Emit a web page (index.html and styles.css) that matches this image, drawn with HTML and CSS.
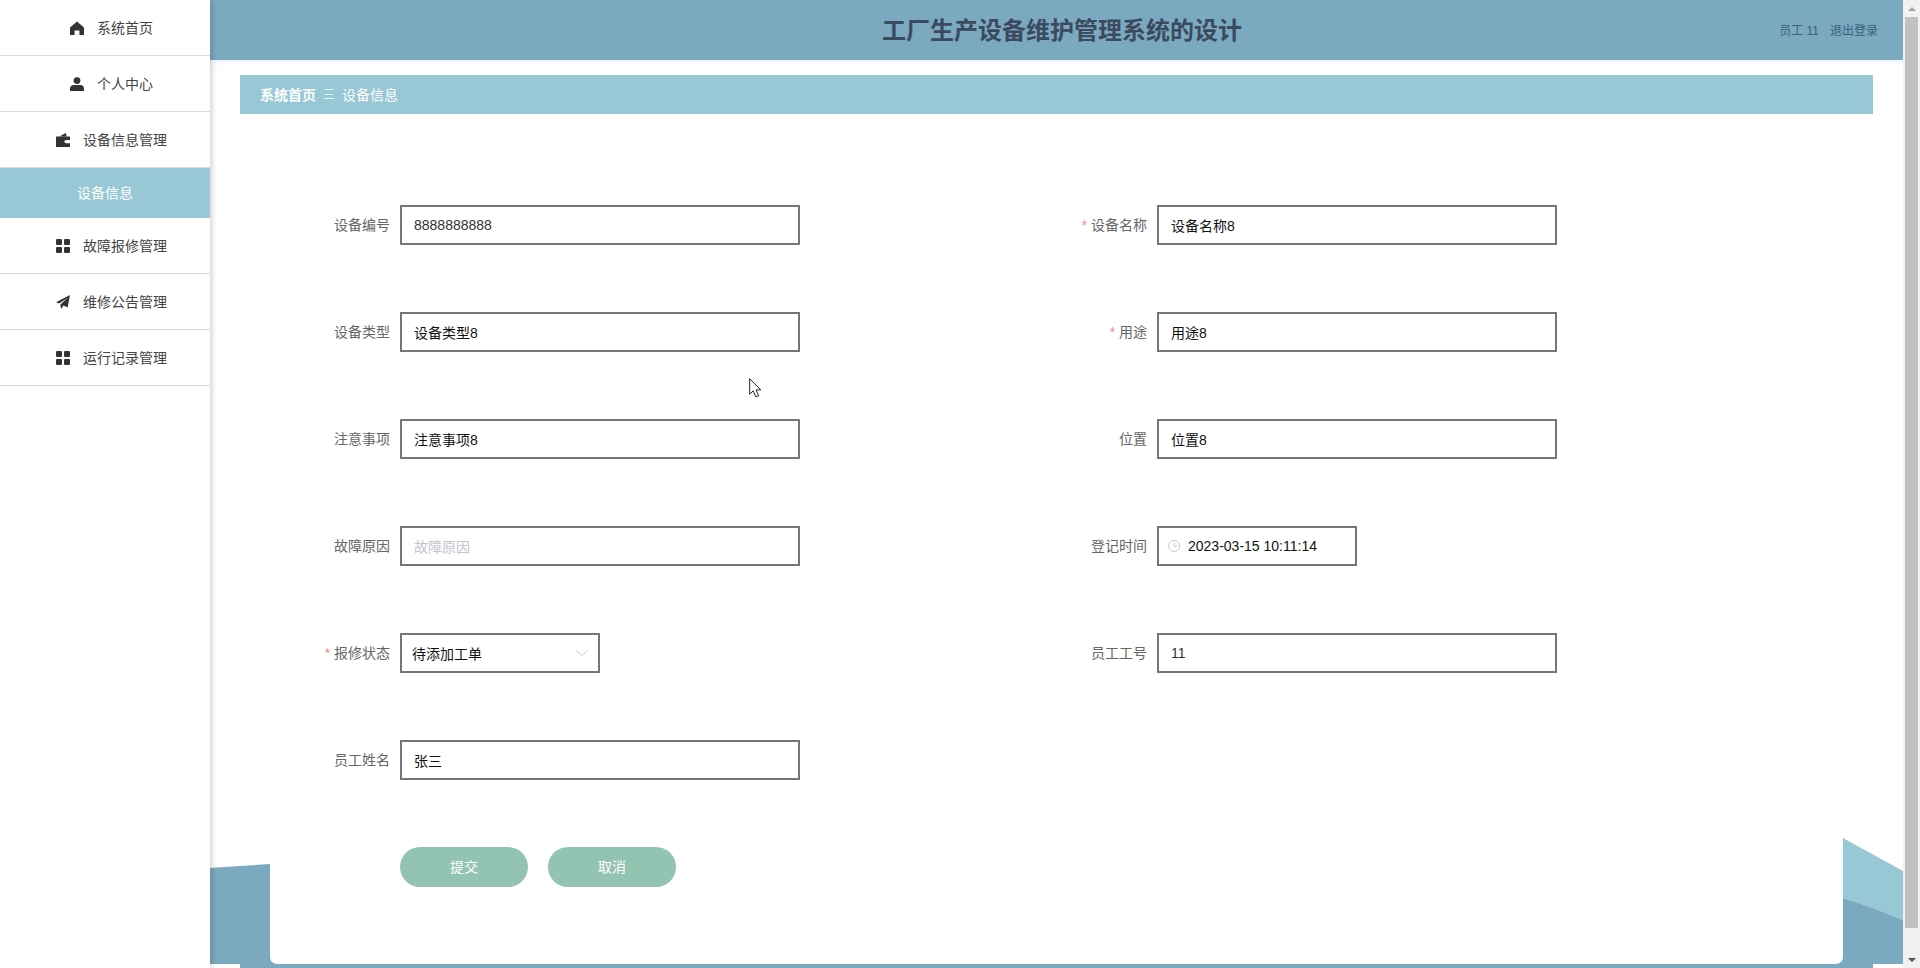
FILE: index.html
```html
<!DOCTYPE html>
<html lang="zh-CN">
<head>
<meta charset="utf-8">
<title>工厂生产设备维护管理系统的设计</title>
<link rel="stylesheet" href="styles.css">
</head>
<body>
<svg class="defs" width="0" height="0" aria-hidden="true">
  <symbol id="i-grid" viewBox="0 0 14 14">
    <rect x="0" y="0" width="6" height="6" rx="1"/><rect x="8" y="0" width="6" height="6" rx="1"/>
    <rect x="0" y="8" width="6" height="6" rx="1"/><rect x="8" y="8" width="6" height="6" rx="1"/>
  </symbol>
</svg>
<div class="app">
  <aside class="sidebar">
    <nav>
      <a class="nav-item">
        <svg class="nav-icon" viewBox="0 0 14 14"><path d="M7 .5 14 6.6V14H9.4V9.6H4.6V14H0V6.6Z"/></svg>
        <span>系统首页</span>
      </a>
      <a class="nav-item">
        <svg class="nav-icon" viewBox="0 0 14 14"><circle cx="7" cy="3.6" r="3.4"/><path d="M0 14v-2.6C0 9.3 1.6 8 3.6 8h6.8c2 0 3.6 1.3 3.6 3.4V14Z"/></svg>
        <span>个人中心</span>
      </a>
      <a class="nav-item">
        <svg class="nav-icon" viewBox="0 0 14 14"><path d="M0 3.5h14V14H0Z"/><path d="M3.5 3.5 9.5 0l1.4 3.5Z"/><path class="cut" d="M14 7h-4a1.6 1.6 0 0 0 0 3.2h4Z"/></svg>
        <span>设备信息管理</span>
      </a>
      <a class="nav-sub">设备信息</a>
      <a class="nav-item">
        <svg class="nav-icon"><use href="#i-grid"/></svg>
        <span>故障报修管理</span>
      </a>
      <a class="nav-item">
        <svg class="nav-icon" viewBox="0 0 14 14"><path d="M14 0 11.6 12.4 7.6 10.6 5 14 4.4 9.4 11.4 3 3.2 8.6 0 7.2Z"/></svg>
        <span>维修公告管理</span>
      </a>
      <a class="nav-item">
        <svg class="nav-icon"><use href="#i-grid"/></svg>
        <span>运行记录管理</span>
      </a>
    </nav>
  </aside>

  <main class="main">
    <svg class="decor" viewBox="0 0 1693 130" aria-hidden="true">
      <path class="dark" d="M0 30 60 26V118Q60 126 68 126H0Z"/>
      <rect class="dark" x="30" y="126" width="1633" height="4"/>
      <path class="light" d="M1633 0 1693 33V82Q1660 68 1633 60Z"/>
      <path class="dark" d="M1633 60Q1660 68 1693 82V126H1625Q1633 126 1633 118Z"/>
    </svg>

    <header class="topbar">
      <div class="title">工厂生产设备维护管理系统的设计</div>
      <div class="user"><span>员工 11</span><span>退出登录</span></div>
    </header>

    <div class="crumbs"><b>系统首页</b><i>三</i><span>设备信息</span></div>

    <form class="form">
      <div class="row"><label>设备编号</label><div class="field muted">8888888888</div></div>
      <div class="row"><label class="req">设备名称</label><div class="field">设备名称8</div></div>
      <div class="row"><label>设备类型</label><div class="field">设备类型8</div></div>
      <div class="row"><label class="req">用途</label><div class="field">用途8</div></div>
      <div class="row"><label>注意事项</label><div class="field">注意事项8</div></div>
      <div class="row"><label>位置</label><div class="field">位置8</div></div>
      <div class="row"><label>故障原因</label><div class="field holder">故障原因</div></div>
      <div class="row">
        <label>登记时间</label>
        <div class="field date">
          <svg class="clock" viewBox="0 0 12 12"><circle cx="6" cy="6" r="5.5"/><path d="M6 2.8V6.4H9"/></svg>
          <span>2023-03-15 10:11:14</span>
        </div>
      </div>
      <div class="row">
        <label class="req">报修状态</label>
        <div class="field select">
          <span>待添加工单</span>
          <svg class="chev" viewBox="0 0 12 6"><path d="M.5.5 6 5.5 11.5.5"/></svg>
        </div>
      </div>
      <div class="row"><label>员工工号</label><div class="field muted">11</div></div>
      <div class="row"><label>员工姓名</label><div class="field">张三</div></div>
      <div class="row"></div>
      <div class="actions">
        <button type="button" class="btn">提交</button>
        <button type="button" class="btn">取消</button>
      </div>
    </form>

    <svg class="cursor" viewBox="0 0 13 20" aria-hidden="true"><path d="M.7.7V16.2L4.2 12.9 6.8 18.9 9.6 17.7 7 11.9H11.8Z"/></svg>
  </main>

  <div class="scrollbar">
    <span class="arrow up"></span>
    <div class="track"><div class="thumb"></div></div>
    <span class="arrow down"></span>
  </div>
</div>
</body>
</html>
```

FILE: styles.css
```css
* { box-sizing: border-box; }

html, body {
  margin: 0;
  height: 100%;
  overflow: hidden;
}

body {
  background: #fff;
  color: #333;
  font-family: "Liberation Sans", "Noto Sans CJK SC", sans-serif;
  font-size: 14px;
}

.defs { position: absolute; }

.app {
  display: flex;
  height: 968px;
}

/* sidebar */
.sidebar {
  flex: 0 0 210px;
  background: #fff;
  box-shadow: 2px 0 6px rgba(0, 0, 0, .18);
  position: relative;
  z-index: 2;
}

.nav-item {
  display: flex;
  align-items: center;
  justify-content: center;
  gap: 13px;
  height: 56px;
  padding-left: 13px;
  border-bottom: 1px solid #dcdcdc;
  color: #444;
}

.nav-item span { padding-bottom: 1px; }

.nav-icon {
  width: 14px;
  height: 14px;
  fill: #333;
  flex: none;
}

.nav-icon .cut { fill: #fff; }

.nav-sub {
  display: flex;
  align-items: center;
  justify-content: center;
  height: 50px;
  padding-bottom: 2px;
  background: #98c7d6;
  color: #fff;
}

/* main */
.main {
  flex: 1;
  min-width: 0;
  position: relative;
  background: #fff;
}

.decor {
  position: absolute;
  left: 0;
  bottom: 0;
  width: 1693px;
  height: 130px;
}

.dark { fill: #7aa9c0; }
.light { fill: #98c7d6; }

.topbar {
  position: relative;
  display: grid;
  grid-template-columns: 1fr auto 1fr;
  align-items: center;
  height: 60px;
  padding: 0 25px 0 36px;
  background: #7aa9c0;
  box-shadow: 0 1px 6px rgba(150, 180, 230, .25);
}

.title {
  grid-column: 2;
  padding-bottom: 4px;
  font-size: 24px;
  font-weight: 700;
  color: #3c4a5f;
}

.user {
  grid-column: 3;
  justify-self: end;
  display: flex;
  gap: 11px;
  padding-bottom: 2px;
  font-size: 12px;
  color: #3d5f7c;
}

.crumbs {
  position: relative;
  display: flex;
  align-items: center;
  height: 39px;
  margin: 15px 30px 0;
  padding: 0 0 2px 20px;
  background: #98c7d6;
  color: #fff;
}

.crumbs b { font-weight: 700; }

.crumbs i {
  width: 12px;
  margin: 0 7px;
  font-style: normal;
  font-size: 12px;
  opacity: .85;
}

/* form */
.form {
  position: relative;
  display: grid;
  grid-template-columns: 757px 757px;
  grid-auto-rows: 40px;
  row-gap: 67px;
  margin: 0 0 0 80px;
  padding-top: 91px;
}

.row {
  display: flex;
  align-items: center;
  gap: 10px;
}

.row label {
  flex: 0 0 100px;
  padding-bottom: 2px;
  text-align: right;
  color: #666;
}

.req::before {
  content: "* ";
  color: #f08a8a;
}

.field {
  display: flex;
  align-items: center;
  width: 400px;
  height: 40px;
  padding: 0 12px;
  border: 2px solid #767676;
  background: #fff;
  color: #111;
}

.muted { color: #333; }
.holder { color: #c0c4cc; }

.date { width: 200px; padding-left: 9px; }

.clock {
  flex: none;
  width: 12px;
  height: 12px;
  margin-right: 8px;
  fill: none;
  stroke: #c8ccd2;
  stroke-width: 1;
}

.select {
  width: 200px;
  justify-content: space-between;
  padding-right: 10px;
  padding-left: 10px;
}

.chev {
  flex: none;
  width: 12px;
  height: 6px;
  fill: none;
  stroke: #c0c4cc;
  stroke-width: 1;
}

.actions {
  grid-column: 1 / -1;
  display: flex;
  gap: 20px;
  padding-left: 110px;
}

.btn {
  width: 128px;
  height: 40px;
  padding: 0 0 2px;
  border: 0;
  border-radius: 20px;
  background: #93c4b1;
  color: #fff;
  font: inherit;
}

.cursor {
  position: absolute;
  left: 539px;
  top: 378px;
  width: 13px;
  height: 20px;
  fill: #fff;
  stroke: #222;
  stroke-width: 1;
}

/* scrollbar */
.scrollbar {
  flex: 0 0 17px;
  position: relative;
  z-index: 3;
  display: flex;
  flex-direction: column;
  background: #f1f1f1;
}

.track {
  flex: 1;
  padding: 0 2px 23px;
}

.thumb {
  height: 100%;
  background: #c1c1c1;
}

.arrow {
  flex: 0 0 17px;
  display: flex;
  align-items: center;
  justify-content: center;
}

.arrow::before {
  content: "";
  border-left: 4px solid transparent;
  border-right: 4px solid transparent;
}

.up::before { border-bottom: 4px solid #a3a3a3; }
.down::before { border-top: 4px solid #505050; }
```
